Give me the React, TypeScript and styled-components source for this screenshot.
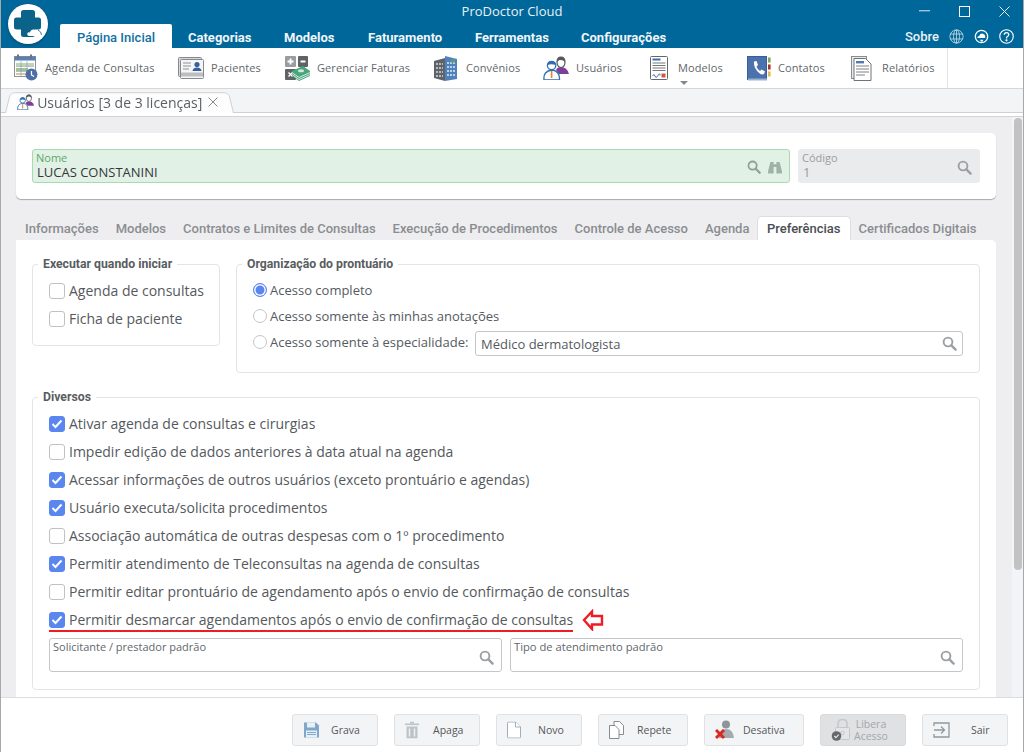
import React from "react";
import styled, { createGlobalStyle } from "styled-components";

const GlobalStyle = createGlobalStyle`
  html, body { margin: 0; padding: 0; }
  body { font-family: "Open Sans", sans-serif; background: #fff; }
`;

const blue = "#00679a";
const textGray = "#555a5f";

const SearchIcon = ({ size = 15, color = "#9aa0a3" }: { size?: number; color?: string }) => (
  <svg width={size} height={size} viewBox="0 0 15 15" fill="none">
    <circle cx="6" cy="6" r="4.4" stroke={color} strokeWidth="1.9" />
    <path d="M9.4 9.4 L13.6 13.6" stroke={color} strokeWidth="2.4" strokeLinecap="round" />
  </svg>
);

const Logo = () => (
  <svg width="40" height="40" viewBox="0 0 40 40">
    <circle cx="20" cy="20" r="20" fill="#fff" />
    <path
      d="M13 8.5 Q13 6 15.5 6 H24.5 Q27 6 27 8.5 V13.5 H30.5 Q33 13.5 33 16 V23 Q33 25.5 30.5 25.5 H27 V30.5 Q27 33 24.5 33 H15.5 Q13 33 13 30.5 V25.5 H8.5 Q6 25.5 6 23 V16 Q6 13.5 8.5 13.5 H13 Z"
      fill="#0b6389"
    />
    <path
      d="M21 32 Q18.8 31.6 19.3 29.4 Q20 27.8 21.8 28.4 Q23 24.8 26.6 25.6 Q29 26.2 29.2 28 Q32.4 27.6 32.6 30 Q32.6 32 30.5 32 Z"
      fill="#fff"
    />
    <path d="M30 26 Q33.5 27.5 33.5 31" fill="none" stroke="#0b6389" strokeWidth="0.8" />
  </svg>
);

const AgendaIcon = () => (
  <svg width="24" height="28" viewBox="0 0 24 28">
    <rect x="0.5" y="2.5" width="21" height="20" fill="#fff" stroke="#8d9399" />
    <rect x="0.5" y="2.5" width="21" height="4" fill="#5b7fb5" />
    <rect x="3" y="0.5" width="2" height="4" fill="#6d7378" />
    <rect x="16" y="0.5" width="2" height="4" fill="#6d7378" />
    <path d="M2 9h18v3H2z" fill="#bcd5b8" />
    <path d="M2 14h12v3H2z" fill="#9cc2a0" />
    <path d="M2 19h10v2H2z" fill="#d4c9a8" />
    <path d="M7 7v15M13 7v15M2 12.5h18M2 17.5h18" stroke="#8d9399" strokeWidth="0.6" />
    <circle cx="17.5" cy="20.5" r="6" fill="#4c6fa8" />
    <path d="M17.5 17v4l2.6 1.6" stroke="#fff" strokeWidth="1.2" fill="none" />
  </svg>
);

const PacientesIcon = () => (
  <svg width="26" height="22" viewBox="0 0 26 22">
    <rect x="0.5" y="0.5" width="23" height="19" rx="1" fill="#d7d8da" stroke="#85888c" />
    <rect x="2.5" y="2.5" width="23" height="19" rx="1" fill="#f5f5f5" stroke="#85888c" />
    <path d="M5 6h8M5 9h8M5 12h6" stroke="#8f9296" strokeWidth="1.2" />
    <circle cx="19" cy="7.5" r="2.6" fill="#35609f" />
    <path d="M14.5 14 Q15 10.5 19 10.5 Q23 10.5 23.5 14 Z" fill="#35609f" />
    <rect x="3" y="15.5" width="22" height="4" fill="#bcbec1" />
  </svg>
);

const FaturasIcon = () => (
  <svg width="25" height="25" viewBox="0 0 25 25">
    <rect x="0" y="0" width="11" height="11" rx="1" fill="#9a9da0" />
    <rect x="13" y="0" width="10" height="11" rx="1" fill="#5f6366" />
    <rect x="0" y="13" width="11" height="11" rx="1" fill="#5f6366" />
    <path d="M5.5 2.5v6M2.5 5.5h6M15.5 5.5h5" stroke="#fff" strokeWidth="1.8" />
    <path d="M3.5 16.5l4 4M7.5 16.5l-4 4" stroke="#fff" strokeWidth="1.4" />
    <path d="M7 15 L18 10 L25 15 L25 20 L14 25 L7 20Z" fill="#49a57c" />
    <path d="M7 16.5 L14 21.5 L25 16.5 M7 18.5 L14 23.5 L25 18.5" stroke="#e5f3ec" strokeWidth="0.9" fill="none" />
    <ellipse cx="16" cy="14.8" rx="3" ry="1.5" fill="#cfe9dc" />
  </svg>
);

const ConveniosIcon = () => (
  <svg width="24" height="25" viewBox="0 0 24 25">
    <path d="M0 5 L11 2 V25 L0 22Z" fill="#5f6366" />
    <path d="M11 0 L23 3 V23 L11 25Z" fill="#4f81bd" />
    <path d="M2 8h7M2 12h7M2 16h7M2 20h7" stroke="#d5d7d9" strokeWidth="1.5" strokeDasharray="2 1" />
    <path d="M13 7h8M13 11h8M13 15h8M13 19h8" stroke="#e0ebf6" strokeWidth="1.5" strokeDasharray="2 1" />
    <rect x="17" y="3.5" width="4" height="3" fill="#5aa06e" />
  </svg>
);

const UsuariosIcon = ({ scale = 1 }: { scale?: number }) => (
  <svg width={26 * scale} height={24 * scale} viewBox="0 0 26 24">
    <path d="M13 14 Q14 11 18 11 Q24 11 26 18 H16Z" fill="#7d3f98" />
    <path d="M14 6 Q14 1 18 1 Q22 1 22 6 Q22 11 18 11.5 Q14 11 14 6Z" fill="#fff" stroke="#55585c" strokeWidth="1.2" />
    <path d="M14 6 Q14 1 18 1 Q22 1 22 6 Q20 3.5 16.5 4 Q15 5 14 6Z" fill="#55585c" />
    <path d="M1 24 Q0 15 9 14 Q17 15 16.5 24Z" fill="#fff" stroke="#2f6eb0" strokeWidth="1.3" />
    <circle cx="8.6" cy="9.5" r="4.2" fill="#fff" stroke="#2f6eb0" strokeWidth="1.3" />
    <path d="M4.5 9 Q5 5 8.6 5 Q12 5 12.8 9 Q8 7.5 4.5 9Z" fill="#2f6eb0" />
    <path d="M8.6 15v7" stroke="#e8862e" strokeWidth="1.6" />
  </svg>
);

const ModelosIcon = () => (
  <svg width="18" height="24" viewBox="0 0 18 24">
    <rect x="0.5" y="0.5" width="17" height="23" rx="1" fill="#fff" stroke="#63676b" />
    <rect x="2.5" y="2.5" width="8" height="2" fill="#3f6db0" />
    <path d="M2.5 7h13M2.5 9.5h13M2.5 12h13M2.5 14.5h13" stroke="#73777b" />
    <path d="M2.5 20 Q4 17 5 20 T8 19.5 T10 19.5" stroke="#3f6db0" fill="none" />
    <rect x="11.5" y="17.5" width="4" height="4" fill="#d2553f" />
  </svg>
);

const ContatosIcon = () => (
  <svg width="24" height="25" viewBox="0 0 24 25">
    <rect x="0.5" y="0.5" width="19" height="23" fill="#4c72ad" stroke="#3b5f95" />
    <rect x="1" y="22.5" width="19" height="2" fill="#9cb2d1" />
    <path
      d="M7 5.5 L9.5 5 L11 9 L9.5 10.5 Q10.5 13.5 13 15 L14.5 13.5 L18 15.5 L17 18 Q14 19.5 10.5 15.5 Q6.5 11 7 5.5Z"
      fill="#fff"
    />
    <rect x="21" y="1.5" width="2.6" height="5" fill="#7fa95a" />
    <rect x="21" y="8.5" width="2.6" height="5" fill="#a8362c" />
    <rect x="21" y="15.5" width="2.6" height="5" fill="#e3bd4a" />
  </svg>
);

const RelatoriosIcon = () => (
  <svg width="21" height="25" viewBox="0 0 21 25">
    <rect x="0.5" y="0.5" width="15" height="22" fill="#e9e9e9" stroke="#8a8d90" />
    <path d="M3 2.5 H14.5 L20 8 V24.5 H3Z" fill="#fff" stroke="#6f7276" />
    <rect x="5" y="5" width="8" height="2.4" fill="#4f77b3" />
    <path d="M5 10h13M5 13h13M5 16h13M5 19h9" stroke="#7c8084" />
  </svg>
);

const GlobeIcon = () => (
  <svg width="15" height="15" viewBox="0 0 15 15" fill="none" stroke="#b9d2e0" strokeWidth="0.9">
    <circle cx="7.5" cy="7.5" r="6.6" />
    <ellipse cx="7.5" cy="7.5" rx="3" ry="6.6" />
    <path d="M7.5 0.9v13.2M1 5h13M1 10h13" />
  </svg>
);

const CloudSyncIcon = () => (
  <svg width="15" height="15" viewBox="0 0 16 16">
    <circle cx="8" cy="8" r="6.6" fill="none" stroke="#fff" strokeWidth="1.4" />
    <path d="M3.5 9.5 Q3.5 7.5 5.5 7.5 Q6.5 4.5 9.5 5 Q12 5.5 12 8 Q13 9.5 11 9.5Z" fill="#fff" />
    <path d="M6 11.5h4l-1.5 2.5" fill="#fff" />
  </svg>
);

const HelpIcon = () => (
  <svg width="15" height="15" viewBox="0 0 16 16" fill="none" stroke="#fff" strokeWidth="1.2">
    <circle cx="8" cy="8" r="7.2" />
    <path d="M5.6 6.2 Q5.7 3.8 8 3.8 Q10.4 3.8 10.4 6 Q10.4 7.2 9 8 Q8 8.6 8 10" strokeWidth="1.4" />
    <circle cx="8" cy="12" r="0.6" fill="#fff" />
  </svg>
);

const BinocularsIcon = () => (
  <svg width="14" height="13" viewBox="0 0 15 14" fill="#9fb2a7">
    <path d="M2.5 1h3.5v2.5h3V1h3.5l2.5 10v2.5H9V6.5H6v7H0V11Z" />
  </svg>
);

const SaveIcon = () => (
  <svg width="17" height="17" viewBox="0 0 17 17">
    <path d="M1 1h12l3 3v12H1Z" fill="#7ea7c9" />
    <rect x="4" y="1" width="8" height="5" fill="#e8eff5" />
    <rect x="3" y="9" width="11" height="7" fill="#e8eff5" />
    <path d="M4 11h9M4 13h9" stroke="#7ea7c9" />
  </svg>
);

const TrashIcon = () => (
  <svg width="14" height="17" viewBox="0 0 14 17" fill="#bcc3c9">
    <rect x="0" y="2" width="14" height="1.6" />
    <rect x="5" y="0" width="4" height="2" />
    <path d="M1.5 5h11v12h-11Z" />
    <path d="M4.5 7v8M9.5 7v8" stroke="#eef0f2" strokeWidth="1.5" />
  </svg>
);

const NewIcon = () => (
  <svg width="14" height="17" viewBox="0 0 14 17" fill="#fff" stroke="#9eb0bd">
    <path d="M0.5 1.5 Q0.5 0.5 1.5 0.5 H8.5 L13.5 5.5 V15.5 Q13.5 16.5 12.5 16.5 H1.5 Q0.5 16.5 0.5 15.5Z" />
    <path d="M8.5 0.5V5.5H13.5" />
  </svg>
);

const RepeatIcon = () => (
  <svg width="15" height="18" viewBox="0 0 15 18" fill="#fff" stroke="#7a7f84" strokeWidth="0.9">
    <path d="M5 0.5H10.5L14.5 4.5V13.5H5Z" />
    <path d="M0.5 4.5H6L10 8.5V17.5H0.5Z" />
  </svg>
);

const DeactivateIcon = () => (
  <svg width="21" height="20" viewBox="0 0 21 20">
    <circle cx="11" cy="4.5" r="4" fill="#8e9498" />
    <path d="M4 18 Q4 9 11 9 Q18 9 19 18Z" fill="#a5aaae" />
    <path d="M1 10 L9 18 M9 10 L1 18" stroke="#d8281f" strokeWidth="3" />
  </svg>
);

const LockIcon = () => (
  <svg width="22" height="23" viewBox="0 0 22 23">
    <path d="M7 9V5.5Q7 1 11.5 1Q16 1 16 5.5V9" fill="none" stroke="#c5c8ca" strokeWidth="1.6" />
    <rect x="4.5" y="9" width="14" height="12" rx="1" fill="#e4e5e6" stroke="#c5c8ca" />
    <circle cx="11.5" cy="14.5" r="1.8" fill="none" stroke="#c5c8ca" />
    <circle cx="5.5" cy="17.5" r="4.8" fill="#66696c" />
    <path d="M3.3 17.5l1.6 1.6 2.8-3" stroke="#e8e8e8" strokeWidth="1.2" fill="none" />
  </svg>
);

const ExitIcon = () => (
  <svg width="17" height="16" viewBox="0 0 17 16" fill="none" stroke="#8f9aa0" strokeWidth="1.3">
    <path d="M1 4V1H16V15H1V12" />
    <path d="M1 8H11M8 4.5 L11.5 8 L8 11.5" />
  </svg>
);

const Window = styled.div`
  width: 1024px;
  height: 752px;
  display: flex;
  flex-direction: column;
  overflow: hidden;
  position: relative;
  box-sizing: border-box;
  border-left: 1px solid #a6a8aa;
  border-right: 1px solid #a6a8aa;
`;

const Header = styled.header`
  height: 48px;
  margin: 0 -1px;
  background: ${blue};
  position: relative;
  flex: none;
`;

const LogoSpot = styled.div`
  position: absolute;
  left: 8px;
  top: 4px;
  width: 40px;
  height: 40px;
  filter: drop-shadow(0 1px 1px rgba(0, 0, 0, 0.3));
`;

const TitleRow = styled.div`
  height: 24px;
  box-sizing: border-box;
  padding-bottom: 2px;
  position: relative;
  display: flex;
  align-items: center;
  justify-content: center;
  color: #e9f1f6;
  font: 400 13px "Open Sans", sans-serif;
`;

const WindowControls = styled.div`
  position: absolute;
  right: 0;
  top: 0;
  height: 22px;
  display: flex;
  align-items: center;
`;

const ControlButton = styled.div`
  width: 40px;
  height: 22px;
  display: flex;
  align-items: center;
  justify-content: center;
`;

const MenuRow = styled.nav`
  height: 24px;
  padding-left: 60px;
  display: flex;
  align-items: stretch;
  font: 700 13px Roboto, sans-serif;
`;

const MenuTab = styled.div<{ $active?: boolean; $width?: number }>`
  width: ${({ $width = 0 }) => $width}px;
  display: flex;
  align-items: center;
  justify-content: ${({ $active }) => ($active ? "center" : "flex-start")};
  padding: 2px 0 0 ${({ $active }) => ($active ? 0 : 16)}px;
  box-sizing: border-box;
  color: ${({ $active }) => ($active ? "#11709f" : "#f1f6f9")};
  background: ${({ $active }) => ($active ? "#fff" : "transparent")};
  border-radius: ${({ $active }) => ($active ? "2px 2px 0 0" : "0")};
  font-weight: ${({ $active }) => ($active ? 500 : 700)};
`;

const MenuRight = styled.div`
  margin-left: auto;
  display: flex;
  align-items: center;
  padding-right: 10px;
  color: #e9f1f6;
  font: 500 13px Roboto, sans-serif;
`;

const MenuIcon = styled.span`
  display: flex;
  margin-left: 10px;
`;

const Ribbon = styled.div`
  height: 41px;
  flex: none;
  display: flex;
  align-items: stretch;
  background: #fff;
  border-bottom: 1px solid #d6d7d9;
  box-sizing: border-box;
`;

const RibbonItems = styled.div`
  width: 947px;
  border-right: 1px solid #e2e3e5;
  box-sizing: border-box;
  display: flex;
`;

const RibbonItem = styled.div<{ $width: number; $textLeft: number; $iconLeft: number }>`
  width: ${({ $width }) => $width}px;
  display: flex;
  align-items: center;
  padding-left: ${({ $iconLeft }) => $iconLeft}px;
  box-sizing: border-box;
  color: #62676b;
  font: 400 11px "Open Sans", sans-serif;
  letter-spacing: 0.1px;
  position: relative;
  flex: none;
  & > span {
    position: absolute;
    left: ${({ $textLeft }) => $textLeft}px;
    white-space: nowrap;
    top: 12px;
  }
`;

const DropCaret = styled.i`
  position: absolute;
  left: 44px;
  top: 33px;
  width: 0;
  height: 0;
  border-left: 4px solid transparent;
  border-right: 4px solid transparent;
  border-top: 4px solid #85898c;
`;

const DocStrip = styled.div`
  height: 28px;
  flex: none;
  background: #fff;
  border-bottom: 1px solid #d2d3d5;
  box-sizing: border-box;
`;

const DocRow = styled.div`
  height: 24px;
  background: #f3f4f6;
  border-bottom: 1px solid #cfd0d2;
  box-sizing: border-box;
  padding-left: 4px;
  display: flex;
  align-items: flex-end;
`;

const DocTab = styled.div`
  height: 22px;
  width: 229px;
  margin-bottom: -1px;
  box-sizing: border-box;
  padding: 0 0 0 12px;
  display: flex;
  align-items: center;
  gap: 3px;
  position: relative;
  isolation: isolate;
  color: #5a5f64;
  font: 400 14px "Open Sans", sans-serif;
  white-space: nowrap;
  &::before {
    content: "";
    position: absolute;
    inset: 0;
    z-index: -1;
    background: #fdfdfd;
    border: 1px solid #cfd0d2;
    border-bottom: none;
    border-radius: 5px 5px 0 0;
    transform: perspective(80px) rotateX(10deg);
    transform-origin: bottom;
  }
`;

const TabClose = styled.span`
  display: flex;
  margin-left: 3px;
`;

const Body = styled.div`
  flex: 1;
  min-height: 0;
  display: flex;
  background: #eeeef0;
  overflow: hidden;
`;

const Content = styled.main`
  flex: 1;
  padding: 16px 16px 0 15px;
  min-width: 0;
`;

const TopCard = styled.section`
  height: 66px;
  box-sizing: border-box;
  padding: 16px;
  background: #fff;
  border-radius: 5px;
  box-shadow: 0 1px 1px #a8a8a8;
  display: flex;
  gap: 8px;
`;

const Field = styled.div<{ $width: number; $variant?: "ok" | "off" | "plain" }>`
  width: ${({ $width }) => $width}px;
  height: 34px;
  box-sizing: border-box;
  position: relative;
  border-radius: 3px;
  padding: 1px 0 0 3px;
  border: 1px solid
    ${({ $variant }) =>
      $variant === "ok" ? "#a9d9ae" : $variant === "off" ? "#eaebed" : "#c4c7c9"};
  background: ${({ $variant }) =>
    $variant === "ok" ? "#e2f1e6" : $variant === "off" ? "#eaebed" : "#fff"};
`;

const FieldLabel = styled.div<{ $tone?: string; $size?: number }>`
  font: 400 ${({ $size = 11 }) => $size}px/13px "Open Sans", sans-serif;
  color: ${({ $tone = "#62676b" }) => $tone};
  white-space: nowrap;
`;

const FieldValue = styled.div<{ $tone?: string }>`
  font: 400 13px/15px "Open Sans", sans-serif;
  color: ${({ $tone = "#33373a" }) => $tone};
  padding-left: 1px;
  margin-top: 1px;
`;

const FieldIcons = styled.div<{ $top?: number }>`
  position: absolute;
  right: 7px;
  top: ${({ $top = 10 }) => $top}px;
  display: flex;
  gap: 7px;
  align-items: center;
`;

const TabBar = styled.div`
  height: 24px;
  margin-top: 17px;
  padding-left: 0.5px;
  display: flex;
`;

const PageTab = styled.div<{ $active?: boolean }>`
  padding: 0 8.5px;
  display: flex;
  align-items: center;
  white-space: nowrap;
  font: 500 13px Roboto, sans-serif;
  color: ${({ $active }) => ($active ? "#4a4e52" : "#8a8d90")};
  background: ${({ $active }) => ($active ? "#fff" : "transparent")};
  border-radius: 5px 5px 0 0;
  ${({ $active }) =>
    $active
      ? "border: 1px solid #dcdde0; border-bottom: none; padding: 0 9px; margin: 0 -0.5px 0 -1px;"
      : ""}
`;

const TabPanel = styled.section`
  background: #fff;
  border-radius: 0 5px 0 0;
  padding: 24px 16px 0;
  height: 457px;
  box-sizing: border-box;
`;

const TopGroups = styled.div`
  display: flex;
  gap: 16px;
  align-items: flex-start;
`;

const Group = styled.fieldset<{ $width: number; $height: number }>`
  width: ${({ $width }) => $width}px;
  height: ${({ $height }) => $height}px;
  box-sizing: border-box;
  margin: -7px 0 0;
  padding: 0;
  border: 1px solid #e3e4e6;
  border-radius: 4px;
  position: relative;
  legend {
    margin-left: 5px;
    padding: 0 5px;
    font: 700 12.25px/14px Roboto, sans-serif;
    color: #595d61;
    height: 14px;
    white-space: nowrap;
  }
`;

const CheckList = styled.div<{ $pl: number; $pt: number; $gap: number }>`
  display: flex;
  flex-direction: column;
  padding: ${({ $pt }) => $pt}px 0 0 ${({ $pl }) => $pl}px;
  gap: ${({ $gap }) => $gap}px;
`;

const CheckRow = styled.label`
  display: flex;
  align-items: center;
  height: 18px;
  gap: 4px;
  color: #55595d;
  font: 400 14px "Open Sans", sans-serif;
  white-space: nowrap;
  position: relative;
`;

const Box = styled.span<{ $checked?: boolean }>`
  width: 16px;
  height: 16px;
  margin-top: 2px;
  box-sizing: border-box;
  border-radius: 3px;
  flex: none;
  border: 1px solid ${({ $checked }) => ($checked ? "#5a86f0" : "#bfc1c3")};
  background: ${({ $checked }) => ($checked ? "#5a86f0" : "#fff")};
  display: flex;
  align-items: center;
  justify-content: center;
`;

const RadioList = styled.div`
  padding: 10px 0 0 16px;
  display: flex;
  flex-direction: column;
  gap: 8px;
`;

const RadioRow = styled.div`
  display: flex;
  align-items: center;
  gap: 3px;
  height: 18px;
  color: ${textGray};
  font: 400 13px "Open Sans", sans-serif;
  white-space: nowrap;
`;

const Radio = styled.span<{ $on?: boolean }>`
  width: 14px;
  height: 14px;
  box-sizing: border-box;
  border-radius: 50%;
  background: ${({ $on }) => ($on ? "#5a86f0" : "#fff")};
  border: 1px solid ${({ $on }) => ($on ? "#5a86f0" : "#c4c6c8")};
  box-shadow: ${({ $on }) => ($on ? "inset 0 0 0 1.5px #fff" : "none")};
  flex: none;
`;

const InlineField = styled.div`
  width: 488px;
  height: 25px;
  margin: 2px 0 0 auto;
  box-sizing: border-box;
  border: 1px solid #c4c7c9;
  border-radius: 3px;
  display: flex;
  align-items: center;
  justify-content: space-between;
  padding: 1px 5px 0;
  color: ${textGray};
  font: 400 13px "Open Sans", sans-serif;
`;

const WideRadioRow = styled(RadioRow)`
  width: 710px;
`;

const DiversosGroup = styled(Group)`
  margin-top: 17px;
`;

const Underline = styled.i`
  position: absolute;
  left: 0;
  top: 20px;
  width: 524px;
  height: 2px;
  background: #ee1c25;
`;

const Arrow = styled.span`
  position: absolute;
  left: 533px;
  top: -1px;
  display: flex;
`;

const BottomFields = styled.div`
  display: flex;
  gap: 8px;
  margin: 10px 0 0 16px;
`;

const ScrollTrack = styled.div`
  width: 11px;
  flex: none;
  background: #f3f4f8;
  padding-top: 1px;
`;

const ScrollThumb = styled.div`
  width: 8px;
  height: 452px;
  margin-left: 2px;
  border-radius: 4px;
  background: #c2c2c2;
`;

const Footer = styled.footer`
  height: 55px;
  flex: none;
  background: #fff;
  border-top: 1px solid #dcdde0;
  box-sizing: border-box;
  padding: 16px 15px 0 0;
  display: flex;
  justify-content: flex-end;
  gap: 16px;
`;

const ActionButton = styled.button<{ $width: number; $disabled?: boolean; $textLeft: number }>`
  width: ${({ $width }) => $width}px;
  height: 32px;
  box-sizing: border-box;
  border: 1px solid ${({ $disabled }) => ($disabled ? "#d8dadb" : "#dfe1e3")};
  border-radius: 3px;
  background: ${({ $disabled }) => ($disabled ? "#e0e1e3" : "#f3f4f6")};
  color: ${({ $disabled }) => ($disabled ? "#a4a7aa" : "#54585c")};
  font: 400 10.5px/12px "Open Sans", sans-serif;
  display: flex;
  align-items: center;
  padding: 0;
  position: relative;
  text-align: center;
  & > svg {
    position: absolute;
    left: 10px;
    top: 50%;
    transform: translateY(-50%);
  }
  & > span {
    position: absolute;
    left: ${({ $textLeft }) => $textLeft}px;
    top: 50%;
    transform: translateY(-50%);
    white-space: pre;
  }
`;

const Check = () => (
  <svg width="12" height="10" viewBox="0 0 12 10" fill="none" stroke="#fff" strokeWidth="2">
    <path d="M1.5 5 L4.5 8 L10.5 1.5" />
  </svg>
);

const ribbonItems = [
  { label: "Agenda de Consultas", icon: <AgendaIcon />, width: 164, iconLeft: 13, textLeft: 44 },
  { label: "Pacientes", icon: <PacientesIcon />, width: 107, iconLeft: 13, textLeft: 46 },
  { label: "Gerenciar Faturas", icon: <FaturasIcon />, width: 149, iconLeft: 13, textLeft: 45 },
  { label: "Convênios", icon: <ConveniosIcon />, width: 109, iconLeft: 13, textLeft: 45 },
  { label: "Usuários", icon: <UsuariosIcon />, width: 106, iconLeft: 13, textLeft: 46 },
  { label: "Modelos", icon: <ModelosIcon />, width: 98, iconLeft: 14, textLeft: 42, caret: true },
  { label: "Contatos", icon: <ContatosIcon />, width: 104, iconLeft: 13, textLeft: 44 },
  { label: "Relatórios", icon: <RelatoriosIcon />, width: 95, iconLeft: 13, textLeft: 44 },
];

const pageTabs = [
  { label: "Informações" },
  { label: "Modelos" },
  { label: "Contratos e Limites de Consultas" },
  { label: "Execução de Procedimentos" },
  { label: "Controle de Acesso" },
  { label: "Agenda" },
  { label: "Preferências", active: true },
  { label: "Certificados Digitais" },
];

const options = [
  { label: "Ativar agenda de consultas e cirurgias", on: true },
  { label: "Impedir edição de dados anteriores à data atual na agenda", on: false },
  { label: "Acessar informações de outros usuários (exceto prontuário e agendas)", on: true },
  { label: "Usuário executa/solicita procedimentos", on: true },
  { label: "Associação automática de outras despesas com o 1º procedimento", on: false },
  { label: "Permitir atendimento de Teleconsultas na agenda de consultas", on: true },
  { label: "Permitir editar prontuário de agendamento após o envio de confirmação de consultas", on: false },
  { label: "Permitir desmarcar agendamentos após o envio de confirmação de consultas", on: true, marked: true },
];

const actions = [
  { label: "Grava", icon: <SaveIcon />, width: 86, textLeft: 38 },
  { label: "Apaga", icon: <TrashIcon />, width: 86, textLeft: 38 },
  { label: "Novo", icon: <NewIcon />, width: 86, textLeft: 41 },
  { label: "Repete", icon: <RepeatIcon />, width: 90, textLeft: 38 },
  { label: "Desativa", icon: <DeactivateIcon />, width: 100, textLeft: 38 },
  { label: "Libera\nAcesso", icon: <LockIcon />, width: 86, textLeft: 33, disabled: true },
  { label: "Sair", icon: <ExitIcon />, width: 86, textLeft: 48 },
];

export default function App() {
  return (
    <Window>
      <GlobalStyle />
      <Header>
        <TitleRow>
          ProDoctor Cloud
          <WindowControls>
            <ControlButton>
              <svg width="11" height="2"><rect width="11" height="1.4" fill="#9fc3d6" /></svg>
            </ControlButton>
            <ControlButton>
              <svg width="11" height="11" fill="none" stroke="#fff"><rect x="0.5" y="0.5" width="10" height="10" /></svg>
            </ControlButton>
            <ControlButton>
              <svg width="11" height="11" stroke="#e9f1f6"><path d="M0.5 0.5 L10.5 10.5 M10.5 0.5 L0.5 10.5" /></svg>
            </ControlButton>
          </WindowControls>
        </TitleRow>
        <MenuRow>
          <MenuTab $active $width={112}>Página Inicial</MenuTab>
          <MenuTab $width={96}>Categorias</MenuTab>
          <MenuTab $width={84}>Modelos</MenuTab>
          <MenuTab $width={107}>Faturamento</MenuTab>
          <MenuTab $width={106}>Ferramentas</MenuTab>
          <MenuTab $width={110}>Configurações</MenuTab>
          <MenuRight>
            Sobre
            <MenuIcon><GlobeIcon /></MenuIcon>
            <MenuIcon><CloudSyncIcon /></MenuIcon>
            <MenuIcon><HelpIcon /></MenuIcon>
          </MenuRight>
        </MenuRow>
        <LogoSpot><Logo /></LogoSpot>
      </Header>

      <Ribbon>
        <RibbonItems>
          {ribbonItems.map((item) => (
            <RibbonItem key={item.label} $width={item.width} $iconLeft={item.iconLeft} $textLeft={item.textLeft}>
              {item.icon}
              <span>{item.label}</span>
              {item.caret && <DropCaret />}
            </RibbonItem>
          ))}
        </RibbonItems>
      </Ribbon>

      <DocStrip>
        <DocRow>
          <DocTab>
            <UsuariosIcon scale={0.66} />
            Usuários [3 de 3 licenças]
            <TabClose>
              <svg width="10" height="10" stroke="#85888c"><path d="M0.5 0.5 L9.5 9.5 M9.5 0.5 L0.5 9.5" /></svg>
            </TabClose>
          </DocTab>
        </DocRow>
      </DocStrip>

      <Body>
        <Content>
          <TopCard>
            <Field $width={758} $variant="ok">
              <FieldLabel $tone="#5aa868">Nome</FieldLabel>
              <FieldValue>LUCAS CONSTANINI</FieldValue>
              <FieldIcons>
                <SearchIcon size={14} color="#8fa096" />
                <BinocularsIcon />
              </FieldIcons>
            </Field>
            <Field $width={182} $variant="off">
              <FieldLabel $tone="#9a9da0">Código</FieldLabel>
              <FieldValue $tone="#9a9da0">1</FieldValue>
              <FieldIcons>
                <SearchIcon />
              </FieldIcons>
            </Field>
          </TopCard>

          <TabBar>
            {pageTabs.map((tab) => (
              <PageTab key={tab.label} $active={tab.active}>
                {tab.label}
              </PageTab>
            ))}
          </TabBar>

          <TabPanel>
            <TopGroups>
              <Group $width={188} $height={89}>
                <legend>Executar quando iniciar</legend>
                <CheckList $pl={16} $pt={10} $gap={10}>
                  <CheckRow><Box />Agenda de consultas</CheckRow>
                  <CheckRow><Box />Ficha de paciente</CheckRow>
                </CheckList>
              </Group>
              <Group $width={744} $height={116}>
                <legend>Organização do prontuário</legend>
                <RadioList>
                  <RadioRow><Radio $on />Acesso completo</RadioRow>
                  <RadioRow><Radio />Acesso somente às minhas anotações</RadioRow>
                  <WideRadioRow>
                    <Radio />Acesso somente à especialidade:
                    <InlineField>
                      Médico dermatologista
                      <SearchIcon />
                    </InlineField>
                  </WideRadioRow>
                </RadioList>
              </Group>
            </TopGroups>

            <DiversosGroup $width={948} $height={300}>
              <legend>Diversos</legend>
              <CheckList $pl={16} $pt={10} $gap={10}>
                {options.map((option) => (
                  <CheckRow key={option.label}>
                    <Box $checked={option.on}>{option.on && <Check />}</Box>
                    {option.label}
                    {option.marked && (
                      <>
                        <Underline />
                        <Arrow>
                          <svg width="22" height="22" viewBox="0 0 22 22" fill="#fff" stroke="#ee1c25" strokeWidth="2.4">
                            <path d="M2 11 L10 2.5 V7 H20 V15.5 H10 V20Z" />
                          </svg>
                        </Arrow>
                      </>
                    )}
                  </CheckRow>
                ))}
              </CheckList>
              <BottomFields>
                <Field $width={453} $variant="plain">
                  <FieldLabel>Solicitante / prestador padrão</FieldLabel>
                  <FieldIcons $top={11}><SearchIcon /></FieldIcons>
                </Field>
                <Field $width={453} $variant="plain">
                  <FieldLabel $size={11.2}>Tipo de atendimento padrão</FieldLabel>
                  <FieldIcons $top={11}><SearchIcon /></FieldIcons>
                </Field>
              </BottomFields>
            </DiversosGroup>
          </TabPanel>
        </Content>
        <ScrollTrack>
          <ScrollThumb />
        </ScrollTrack>
      </Body>

      <Footer>
        {actions.map((action) => (
          <ActionButton
            key={action.label}
            $width={action.width}
            $disabled={action.disabled}
            $textLeft={action.textLeft}
          >
            {action.icon}
            <span>{action.label}</span>
          </ActionButton>
        ))}
      </Footer>
    </Window>
  );
}
